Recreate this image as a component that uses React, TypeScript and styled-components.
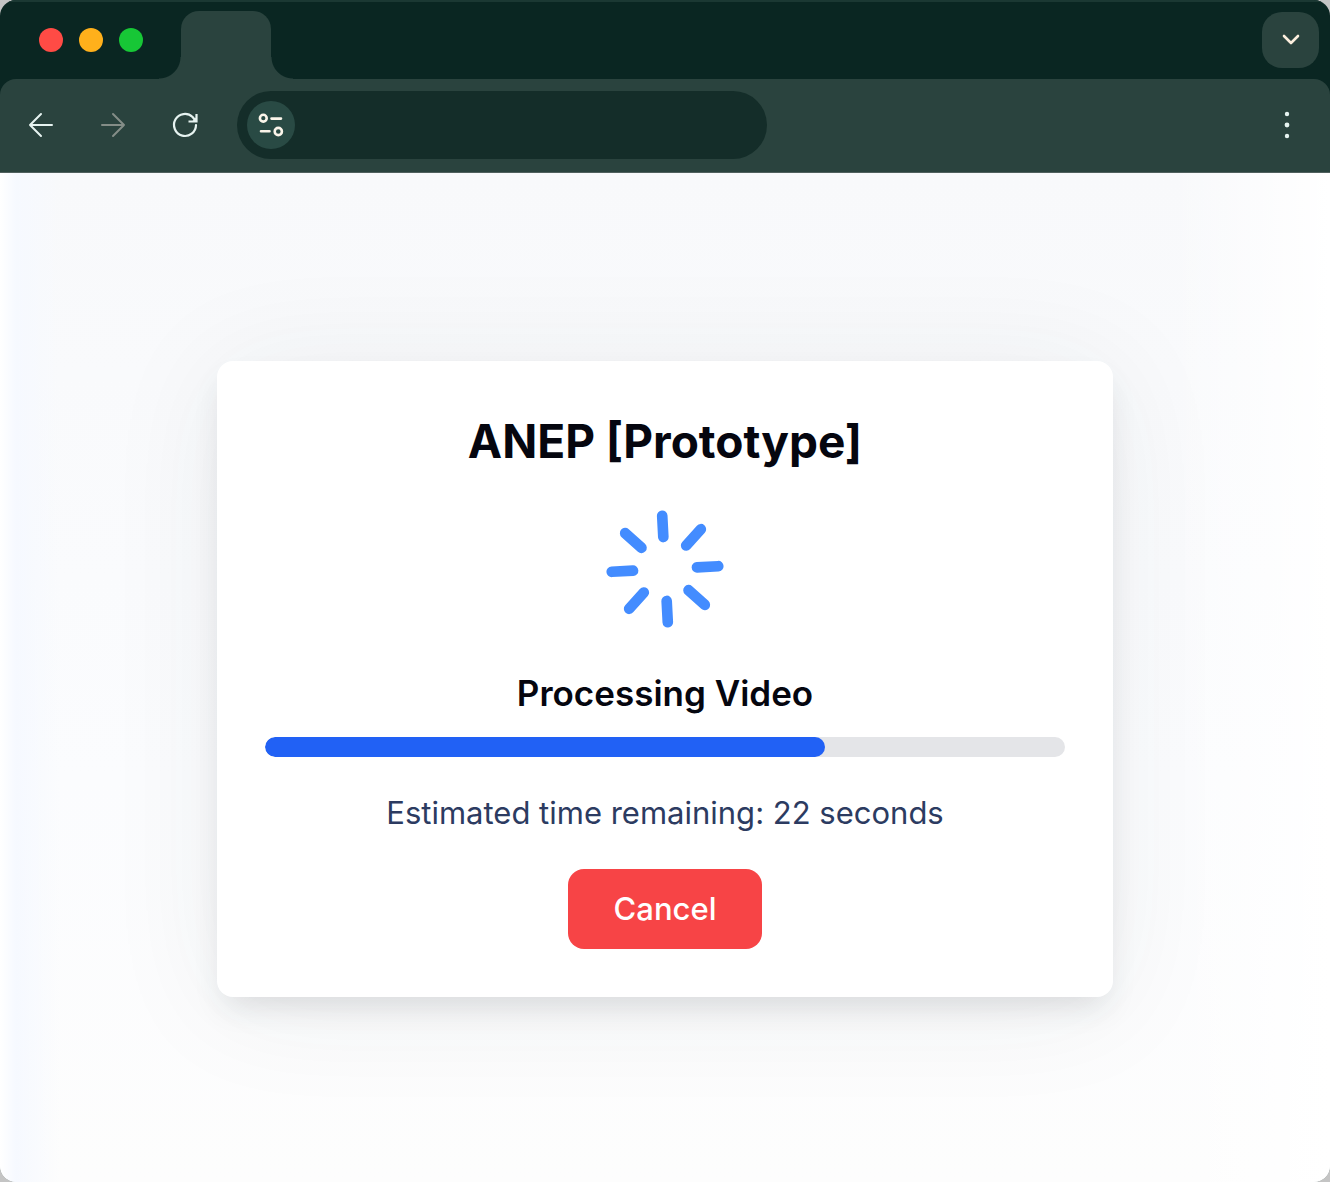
import React from "react";
import styled, { createGlobalStyle } from "styled-components";
import { Loader } from "lucide-react";

const GlobalStyle = createGlobalStyle`
  * { box-sizing: border-box; }
  body {
    margin: 0;
    background: #c4c4c4;
    font-family: Inter, "Liberation Sans", sans-serif;
  }
`;

const frame = "#0a2622";
const surface = "#2a433e";

const Window = styled.div`
  display: flex;
  flex-direction: column;
  min-height: 100vh;
  border-radius: 16px;
  overflow: hidden;
  background: ${frame};
`;

const TabStrip = styled.header`
  display: flex;
  align-items: flex-end;
  height: 79px;
  padding: 0 11px 0 39px;
  box-shadow: inset 0 2px 0 #1b3833;
`;

const Lights = styled.div`
  display: flex;
  gap: 16px;
  align-self: center;
  margin-right: 38px;
`;

const Light = styled.span<{ $color: string }>`
  width: 24px;
  height: 24px;
  border-radius: 50%;
  background: ${(p) => p.$color};
`;

const Tab = styled.div`
  position: relative;
  width: 90px;
  height: 68px;
  border-radius: 18px 18px 0 0;
  background: ${surface};

  &::before,
  &::after {
    content: "";
    position: absolute;
    bottom: 0;
    width: 22px;
    height: 22px;
  }
  &::before {
    right: 100%;
    background: radial-gradient(circle at 0 0, transparent 21px, ${surface} 22px);
  }
  &::after {
    left: 100%;
    background: radial-gradient(circle at 100% 0, transparent 21px, ${surface} 22px);
  }
`;

const TabMenu = styled.button`
  display: grid;
  place-items: center;
  align-self: center;
  width: 57px;
  height: 56px;
  margin-left: auto;
  padding: 0;
  border: 0;
  border-radius: 20px;
  background: ${surface};
  color: #fbeedd;
`;

const Toolbar = styled.nav`
  display: flex;
  align-items: center;
  height: 94px;
  padding: 0 23px 2px 21px;
  border-bottom: 1px solid #50605e;
  border-radius: 16px 16px 0 0;
  background: ${surface};
`;

const NavButtons = styled.div`
  display: flex;
  gap: 32px;
  margin-right: 32px;
`;

const IconButton = styled.button`
  display: grid;
  place-items: center;
  width: 40px;
  height: 40px;
  padding: 0;
  border: 0;
  background: none;
  color: #e6f3f0;

  &:disabled { color: #848d87; }
`;

const AddressBar = styled.div`
  display: flex;
  flex: 1;
  align-items: center;
  max-width: 530px;
  height: 68px;
  padding: 0 10px;
  border-radius: 34px;
  background: #142d29;
`;

const SiteButton = styled.button`
  display: grid;
  place-items: center;
  flex: none;
  width: 48px;
  height: 48px;
  padding: 0;
  border: 0;
  border-radius: 50%;
  background: #294a44;
  color: #fbf5ea;
`;

const AddressInput = styled.input`
  flex: 1;
  min-width: 0;
  height: 48px;
  padding: 0 12px;
  border: 0;
  outline: 0;
  background: transparent;
  color: #eef8f6;
  font: 24px Inter, sans-serif;
`;

const MenuSlot = styled.div`
  margin-left: auto;
`;

const Page = styled.main`
  display: flex;
  flex: 1;
  align-items: center;
  justify-content: center;
  padding: 2px 24px 0;
  background:
    linear-gradient(to right, #ffffff 0, #f6f9ff 16px, rgba(250, 252, 255, 0) 60px),
    linear-gradient(to left, #ffffff 0, rgba(255, 255, 255, 0) 160px),
    linear-gradient(to bottom, #f8f9fb, #fbfcfe 60%, #fdfdfd);
`;

const Card = styled.section`
  display: flex;
  flex-direction: column;
  align-items: center;
  width: 100%;
  max-width: 896px;
  padding: 48px;
  border-radius: 16px;
  background: #ffffff;
  box-shadow:
    0 16px 32px -8px rgba(40, 50, 60, 0.14),
    0 8px 120px rgba(40, 50, 60, 0.07);
`;

const Title = styled.h1`
  margin: 0 0 32px;
  color: #05060f;
  font-size: 46px;
  font-weight: 700;
  line-height: 64px;
`;

const Spinner = styled(Loader)`
  color: #438cff;
  transform: rotate(-3deg);
`;

const Status = styled.h2`
  margin: 32px 0 16px;
  color: #05060f;
  font-size: 35px;
  font-weight: 600;
  line-height: 56px;
`;

const Track = styled.div`
  width: 100%;
  height: 20px;
  border-radius: 10px;
  overflow: hidden;
  background: #e4e5e8;
`;

const Fill = styled.div`
  height: 100%;
  border-radius: 10px;
  background: #2161f5;
`;

const Remaining = styled.p`
  margin: 32px 0;
  color: #2c3b61;
  font-size: 31px;
  line-height: 48px;
`;

const CancelButton = styled.button`
  height: 80px;
  padding: 0 46px;
  border: 0;
  border-radius: 16px;
  background: #f74446;
  color: #ffffff;
  font-family: inherit;
  font-size: 31px;
  font-weight: 500;
  line-height: 48px;
`;

const progress = 70;
const secondsLeft = 22;

const stroke = {
  fill: "none",
  stroke: "currentColor",
  strokeLinecap: "round",
  strokeLinejoin: "round",
} as const;

export default function App() {
  return (
    <>
      <GlobalStyle />
      <Window>
        <TabStrip>
          <Lights>
            <Light $color="#ff4b45" />
            <Light $color="#ffb01b" />
            <Light $color="#17c736" />
          </Lights>
          <Tab />
          <TabMenu aria-label="Search tabs">
            <svg width="24" height="24" {...stroke} strokeWidth="2.6">
              <path d="M5 8l7 7 7-7" />
            </svg>
          </TabMenu>
        </TabStrip>
        <Toolbar aria-label="Browser">
          <NavButtons>
            <IconButton aria-label="Back">
              <svg width="26" height="26" {...stroke} strokeWidth="2">
                <path d="M24 13H2M13 2L2 13l11 11" />
              </svg>
            </IconButton>
            <IconButton aria-label="Forward" disabled>
              <svg width="26" height="26" {...stroke} strokeWidth="2">
                <path d="M2 13h22M13 2l11 11-11 11" />
              </svg>
            </IconButton>
            <IconButton aria-label="Reload">
              <svg width="28" height="28" {...stroke} strokeWidth="2.2">
                <path d="M25 14a11 11 0 1 1-3.400-8L24 9" />
                <path d="M25.500 3v7.500H17.500" strokeLinecap="butt" strokeLinejoin="miter" />
                <path d="M25.500 6v4.500h-4.500z" fill="currentColor" stroke="none" />
              </svg>
            </IconButton>
          </NavButtons>
          <AddressBar>
            <SiteButton aria-label="Site information">
              <svg width="26" height="26" {...stroke} strokeWidth="2.6">
                <circle cx="5.300" cy="6.200" r="3.400" />
                <path d="M13.500 6.600h9.500M3 19.300h8.500" />
                <circle cx="20.300" cy="19.500" r="3.600" />
              </svg>
            </SiteButton>
            <AddressInput aria-label="Address" type="text" />
          </AddressBar>
          <MenuSlot>
            <IconButton aria-label="Menu">
              <svg width="8" height="28" fill="currentColor">
                <circle cx="4" cy="3" r="2.2" />
                <circle cx="4" cy="14" r="2.4" />
                <circle cx="4" cy="25" r="2.2" />
              </svg>
            </IconButton>
          </MenuSlot>
        </Toolbar>
        <Page>
          <Card>
            <Title>ANEP [Prototype]</Title>
            <Spinner size={128} strokeWidth={2} aria-hidden="true" />
            <Status>Processing Video</Status>
            <Track
              role="progressbar"
              aria-label="Processing Video"
              aria-valuenow={progress}
              aria-valuemin={0}
              aria-valuemax={100}
            >
              <Fill style={{ width: `${progress}%` }} />
            </Track>
            <Remaining>Estimated time remaining: {secondsLeft} seconds</Remaining>
            <CancelButton type="button">Cancel</CancelButton>
          </Card>
        </Page>
      </Window>
    </>
  );
}
